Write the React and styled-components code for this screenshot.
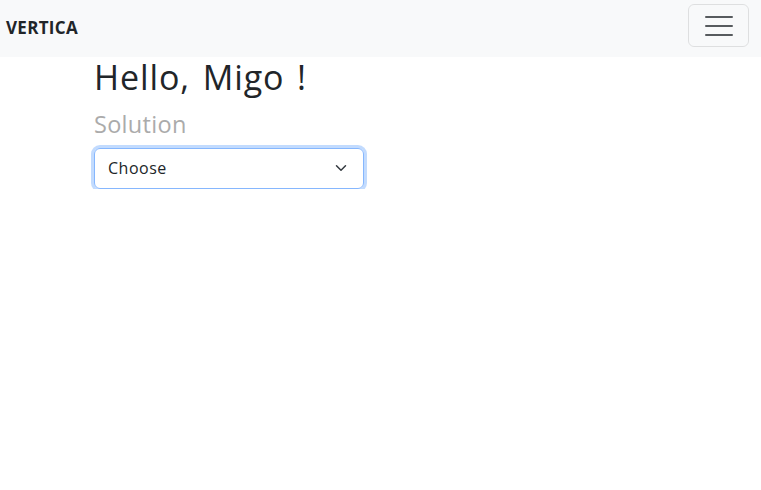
import React from 'react';
import styled, { createGlobalStyle } from 'styled-components';

const GlobalStyle = createGlobalStyle`
  body {
    margin: 0;
    background: #fff;
    color: #212529;
    font-family: "Open Sans", "Noto Sans", sans-serif;
  }
`;

const Navbar = styled.nav`
  display: flex;
  align-items: center;
  justify-content: space-between;
  height: 57px;
  padding: 0 12px 0 6px;
  background-color: #f8f9fa;
  box-sizing: border-box;
`;

const Brand = styled.a`
  margin-top: -3px;
  font-size: 17px;
  font-weight: 700;
  color: #212529;
  text-decoration: none;
  letter-spacing: 0.3px;
`;

const Toggler = styled.button`
  display: flex;
  align-items: center;
  justify-content: center;
  width: 61px;
  height: 43px;
  margin-top: -6px;
  padding: 0;
  background: transparent;
  border: 1px solid rgba(0, 0, 0, 0.1);
  border-radius: 6px;
`;

const Main = styled.main`
  padding-left: 94px;
`;

const Title = styled.h1`
  margin: 0 0 12px;
  font-size: 34px;
  font-weight: 400;
  line-height: 1.2;
  letter-spacing: 0.9px;
  word-spacing: 3px;
`;

const Subtitle = styled.h4`
  margin: 0 0 10px;
  font-size: 23.5px;
  font-weight: 400;
  line-height: 1.2;
  color: #ababab;
  letter-spacing: 0.3px;
`;

const SelectBox = styled.div`
  display: flex;
  align-items: center;
  justify-content: space-between;
  width: 270px;
  height: 41px;
  padding: 0 14px 0 13px;
  box-sizing: border-box;
  border: 1px solid #86b7fe;
  border-radius: 6px;
  box-shadow: 0 0 0 3px rgba(13, 110, 253, 0.25);
  font-size: 16px;
  letter-spacing: 0.5px;
  color: #212529;
`;

const Chevron = () => (
  <svg width="16" height="12" viewBox="0 0 16 16" fill="none">
    <path d="m2 5 6 6 6-6" stroke="#343a40" strokeWidth="2" strokeLinecap="round" strokeLinejoin="round" />
  </svg>
);

const Burger = () => (
  <svg width="28" height="22" viewBox="0 0 28 22">
    <path d="M1 2h26M1 11h26M1 20h26" stroke="rgba(33,37,41,0.75)" strokeWidth="2" strokeLinecap="round" />
  </svg>
);

export default function App() {
  return (
    <>
      <GlobalStyle />
      <Navbar>
        <Brand>VERTICA</Brand>
        <Toggler aria-label="Toggle navigation">
          <Burger />
        </Toggler>
      </Navbar>
      <Main>
        <Title>Hello, Migo !</Title>
        <Subtitle>Solution</Subtitle>
        <SelectBox>
          <span>Choose</span>
          <Chevron />
        </SelectBox>
      </Main>
    </>
  );
}
